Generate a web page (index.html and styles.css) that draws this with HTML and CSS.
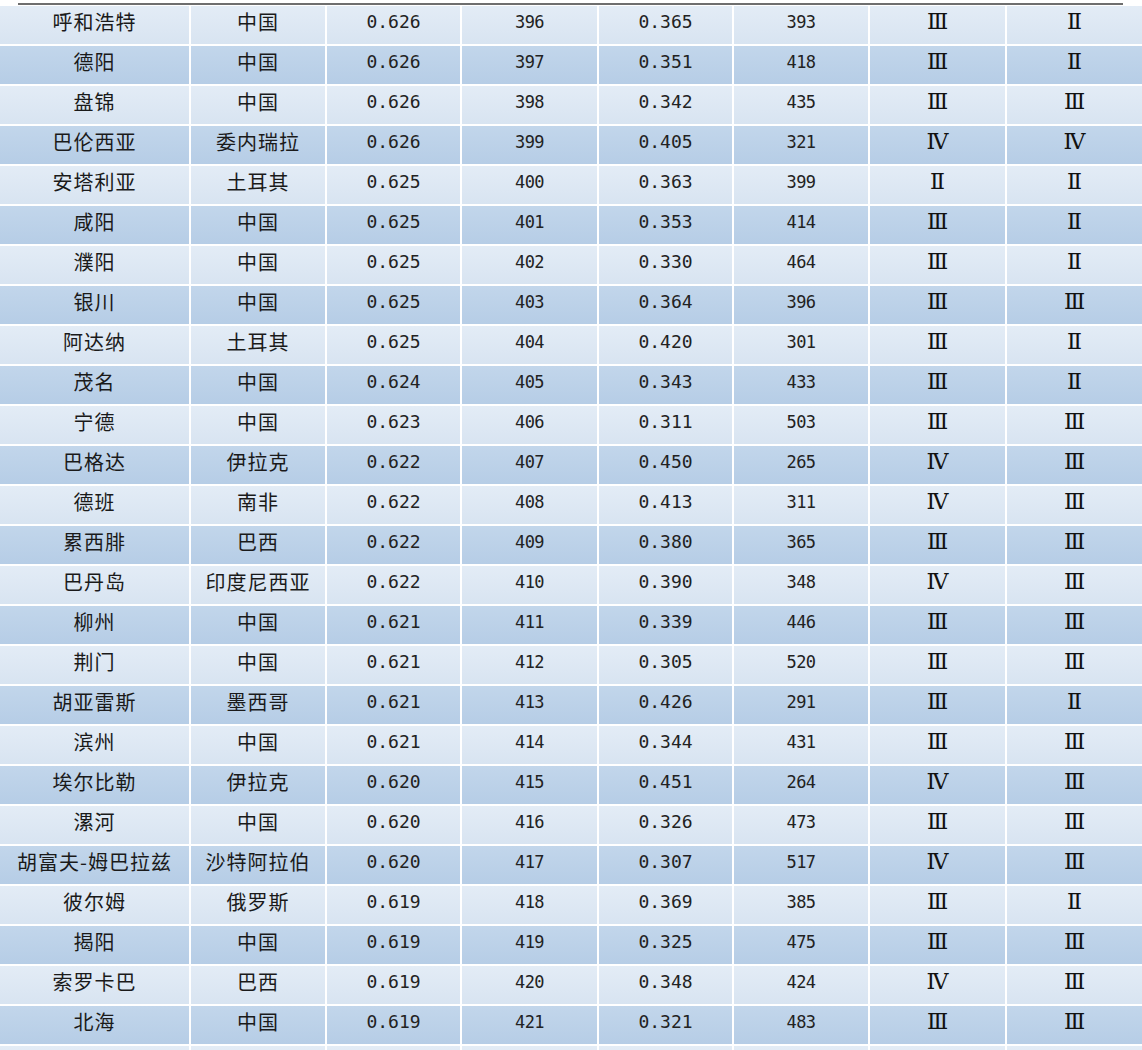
FILE: index.html
```html
<!DOCTYPE html>
<html lang="zh">
<head>
<meta charset="utf-8">
<link rel="stylesheet" href="styles.css">
</head>
<body>
<div class="rule"></div>
<div class="table">
  <div class="row"><div class="cell zh">呼和浩特</div><div class="cell zh">中国</div><div class="cell num">0.626</div><div class="cell rank">396</div><div class="cell num">0.365</div><div class="cell rank">393</div><div class="cell roman">Ⅲ</div><div class="cell roman">Ⅱ</div></div>
  <div class="row alt"><div class="cell zh">德阳</div><div class="cell zh">中国</div><div class="cell num">0.626</div><div class="cell rank">397</div><div class="cell num">0.351</div><div class="cell rank">418</div><div class="cell roman">Ⅲ</div><div class="cell roman">Ⅱ</div></div>
  <div class="row"><div class="cell zh">盘锦</div><div class="cell zh">中国</div><div class="cell num">0.626</div><div class="cell rank">398</div><div class="cell num">0.342</div><div class="cell rank">435</div><div class="cell roman">Ⅲ</div><div class="cell roman">Ⅲ</div></div>
  <div class="row alt"><div class="cell zh">巴伦西亚</div><div class="cell zh">委内瑞拉</div><div class="cell num">0.626</div><div class="cell rank">399</div><div class="cell num">0.405</div><div class="cell rank">321</div><div class="cell roman">Ⅳ</div><div class="cell roman">Ⅳ</div></div>
  <div class="row"><div class="cell zh">安塔利亚</div><div class="cell zh">土耳其</div><div class="cell num">0.625</div><div class="cell rank">400</div><div class="cell num">0.363</div><div class="cell rank">399</div><div class="cell roman">Ⅱ</div><div class="cell roman">Ⅱ</div></div>
  <div class="row alt"><div class="cell zh">咸阳</div><div class="cell zh">中国</div><div class="cell num">0.625</div><div class="cell rank">401</div><div class="cell num">0.353</div><div class="cell rank">414</div><div class="cell roman">Ⅲ</div><div class="cell roman">Ⅱ</div></div>
  <div class="row"><div class="cell zh">濮阳</div><div class="cell zh">中国</div><div class="cell num">0.625</div><div class="cell rank">402</div><div class="cell num">0.330</div><div class="cell rank">464</div><div class="cell roman">Ⅲ</div><div class="cell roman">Ⅱ</div></div>
  <div class="row alt"><div class="cell zh">银川</div><div class="cell zh">中国</div><div class="cell num">0.625</div><div class="cell rank">403</div><div class="cell num">0.364</div><div class="cell rank">396</div><div class="cell roman">Ⅲ</div><div class="cell roman">Ⅲ</div></div>
  <div class="row"><div class="cell zh">阿达纳</div><div class="cell zh">土耳其</div><div class="cell num">0.625</div><div class="cell rank">404</div><div class="cell num">0.420</div><div class="cell rank">301</div><div class="cell roman">Ⅲ</div><div class="cell roman">Ⅱ</div></div>
  <div class="row alt"><div class="cell zh">茂名</div><div class="cell zh">中国</div><div class="cell num">0.624</div><div class="cell rank">405</div><div class="cell num">0.343</div><div class="cell rank">433</div><div class="cell roman">Ⅲ</div><div class="cell roman">Ⅱ</div></div>
  <div class="row"><div class="cell zh">宁德</div><div class="cell zh">中国</div><div class="cell num">0.623</div><div class="cell rank">406</div><div class="cell num">0.311</div><div class="cell rank">503</div><div class="cell roman">Ⅲ</div><div class="cell roman">Ⅲ</div></div>
  <div class="row alt"><div class="cell zh">巴格达</div><div class="cell zh">伊拉克</div><div class="cell num">0.622</div><div class="cell rank">407</div><div class="cell num">0.450</div><div class="cell rank">265</div><div class="cell roman">Ⅳ</div><div class="cell roman">Ⅲ</div></div>
  <div class="row"><div class="cell zh">德班</div><div class="cell zh">南非</div><div class="cell num">0.622</div><div class="cell rank">408</div><div class="cell num">0.413</div><div class="cell rank">311</div><div class="cell roman">Ⅳ</div><div class="cell roman">Ⅲ</div></div>
  <div class="row alt"><div class="cell zh">累西腓</div><div class="cell zh">巴西</div><div class="cell num">0.622</div><div class="cell rank">409</div><div class="cell num">0.380</div><div class="cell rank">365</div><div class="cell roman">Ⅲ</div><div class="cell roman">Ⅲ</div></div>
  <div class="row"><div class="cell zh">巴丹岛</div><div class="cell zh">印度尼西亚</div><div class="cell num">0.622</div><div class="cell rank">410</div><div class="cell num">0.390</div><div class="cell rank">348</div><div class="cell roman">Ⅳ</div><div class="cell roman">Ⅲ</div></div>
  <div class="row alt"><div class="cell zh">柳州</div><div class="cell zh">中国</div><div class="cell num">0.621</div><div class="cell rank">411</div><div class="cell num">0.339</div><div class="cell rank">446</div><div class="cell roman">Ⅲ</div><div class="cell roman">Ⅲ</div></div>
  <div class="row"><div class="cell zh">荆门</div><div class="cell zh">中国</div><div class="cell num">0.621</div><div class="cell rank">412</div><div class="cell num">0.305</div><div class="cell rank">520</div><div class="cell roman">Ⅲ</div><div class="cell roman">Ⅲ</div></div>
  <div class="row alt"><div class="cell zh">胡亚雷斯</div><div class="cell zh">墨西哥</div><div class="cell num">0.621</div><div class="cell rank">413</div><div class="cell num">0.426</div><div class="cell rank">291</div><div class="cell roman">Ⅲ</div><div class="cell roman">Ⅱ</div></div>
  <div class="row"><div class="cell zh">滨州</div><div class="cell zh">中国</div><div class="cell num">0.621</div><div class="cell rank">414</div><div class="cell num">0.344</div><div class="cell rank">431</div><div class="cell roman">Ⅲ</div><div class="cell roman">Ⅲ</div></div>
  <div class="row alt"><div class="cell zh">埃尔比勒</div><div class="cell zh">伊拉克</div><div class="cell num">0.620</div><div class="cell rank">415</div><div class="cell num">0.451</div><div class="cell rank">264</div><div class="cell roman">Ⅳ</div><div class="cell roman">Ⅲ</div></div>
  <div class="row"><div class="cell zh">漯河</div><div class="cell zh">中国</div><div class="cell num">0.620</div><div class="cell rank">416</div><div class="cell num">0.326</div><div class="cell rank">473</div><div class="cell roman">Ⅲ</div><div class="cell roman">Ⅲ</div></div>
  <div class="row alt"><div class="cell zh">胡富夫-姆巴拉兹</div><div class="cell zh">沙特阿拉伯</div><div class="cell num">0.620</div><div class="cell rank">417</div><div class="cell num">0.307</div><div class="cell rank">517</div><div class="cell roman">Ⅳ</div><div class="cell roman">Ⅲ</div></div>
  <div class="row"><div class="cell zh">彼尔姆</div><div class="cell zh">俄罗斯</div><div class="cell num">0.619</div><div class="cell rank">418</div><div class="cell num">0.369</div><div class="cell rank">385</div><div class="cell roman">Ⅲ</div><div class="cell roman">Ⅱ</div></div>
  <div class="row alt"><div class="cell zh">揭阳</div><div class="cell zh">中国</div><div class="cell num">0.619</div><div class="cell rank">419</div><div class="cell num">0.325</div><div class="cell rank">475</div><div class="cell roman">Ⅲ</div><div class="cell roman">Ⅲ</div></div>
  <div class="row"><div class="cell zh">索罗卡巴</div><div class="cell zh">巴西</div><div class="cell num">0.619</div><div class="cell rank">420</div><div class="cell num">0.348</div><div class="cell rank">424</div><div class="cell roman">Ⅳ</div><div class="cell roman">Ⅲ</div></div>
  <div class="row alt"><div class="cell zh">北海</div><div class="cell zh">中国</div><div class="cell num">0.619</div><div class="cell rank">421</div><div class="cell num">0.321</div><div class="cell rank">483</div><div class="cell roman">Ⅲ</div><div class="cell roman">Ⅲ</div></div>
  <div class="row"><div class="cell"></div><div class="cell"></div><div class="cell"></div><div class="cell"></div><div class="cell"></div><div class="cell"></div><div class="cell"></div><div class="cell"></div></div>
</div>
</body>
</html>
```

FILE: styles.css
```css
html, body {
  margin: 0;
  padding: 0;
  background: #ffffff;
  overflow: hidden;
}

body {
  width: 1142px;
  height: 1050px;
  font-family: "Noto Sans CJK SC", "Liberation Sans", sans-serif;
  color: #141414;
}

.rule {
  margin: 3px 0 0 18px;
  width: 1105px;
  height: 2px;
  background: #6e6e6e;
}

.table {
  margin-top: 1px;
  display: flex;
  flex-direction: column;
  gap: 2px;
}

.row {
  display: grid;
  grid-template-columns: 189px 134px 133px 135px 133px 134px 135px 135px;
  column-gap: 2px;
  height: 38px;
}

.cell {
  display: flex;
  align-items: center;
  justify-content: center;
  padding-bottom: 7px;
  box-sizing: border-box;
  background: linear-gradient(#e3ecf6, #d8e4f1);
  white-space: nowrap;
}

.row.alt .cell {
  background: linear-gradient(#c2d6eb, #b6cde6);
}

.zh {
  font-family: "Noto Sans CJK SC", sans-serif;
  font-size: 20px;
  letter-spacing: 1px;
  color: #1a1a1a;
}

.num {
  font-family: "DejaVu Sans Mono", monospace;
  font-size: 18px;
  color: #222;
}

.rank {
  font-family: "DejaVu Sans Mono", monospace;
  font-size: 17px;
  letter-spacing: -0.5px;
  color: #222;
}

.roman {
  font-family: "Liberation Serif", "DejaVu Serif", serif;
  font-size: 22px;
  color: #111;
}
```
